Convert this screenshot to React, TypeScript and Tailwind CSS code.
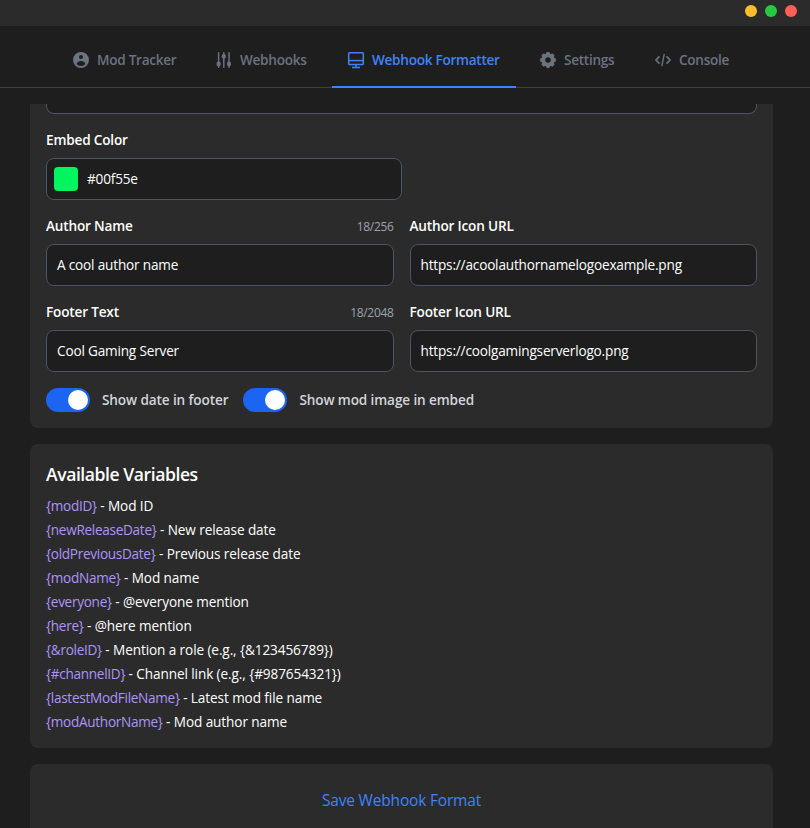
import type { ReactNode } from "react";
import { HiUserCircle } from "react-icons/hi";

function SlidersIcon() {
  return (
    <svg viewBox="0 0 20 20" className="h-5 w-5" fill="currentColor" stroke="currentColor" strokeWidth="1.5" strokeLinecap="round">
      <path d="M4.6 2.8v14.4M9.8 2.8v14.4M15 2.8v14.4" />
      <g stroke="none">
        <ellipse cx="4.6" cy="14" rx="2.1" ry="2.4" />
        <ellipse cx="9.8" cy="6.4" rx="2.1" ry="2.4" />
        <ellipse cx="15" cy="14" rx="2.1" ry="2.4" />
      </g>
    </svg>
  );
}

function MonitorIcon() {
  return (
    <svg viewBox="0 0 20 20" className="h-5 w-5" fill="none" stroke="currentColor" strokeWidth="1.5">
      <rect x="2.7" y="2.7" width="14.6" height="11.8" rx="0.8" />
      <path d="M2.7 10.6h14.6" />
      <path d="M10 14.3v3M6 17.4h8" />
    </svg>
  );
}

function GearIcon() {
  return (
    <svg viewBox="0 0 20 20" className="h-5 w-5" fill="currentColor">
      <circle cx="10" cy="10" r="4.75" fill="none" stroke="currentColor" strokeWidth="4" />
      {[0, 45, 90, 135, 180, 225, 270, 315].map((a) => (
        <rect key={a} x="8.1" y="2.1" width="3.8" height="3" rx="1.1" transform={`rotate(${a} 10 10)`} />
      ))}
    </svg>
  );
}

function CodeIcon() {
  return (
    <svg viewBox="0 0 20 20" className="h-5 w-5" fill="none" stroke="currentColor" strokeWidth="1.7" strokeLinecap="round" strokeLinejoin="round">
      <path d="M6 6.8 2.9 10 6 13.2M14 6.8l3.1 3.2-3.1 3.2" />
      <path d="M11.2 4.4 8.9 15.6" strokeWidth="1.4" />
    </svg>
  );
}

const tabs: { label: string; icon: ReactNode; width: string; active?: boolean }[] = [
  { label: "Mod Tracker", icon: <HiUserCircle className="h-5 w-5" />, width: "w-[135px]" },
  { label: "Webhooks", icon: <SlidersIcon />, width: "w-[124px]" },
  { label: "Webhook Formatter", icon: <MonitorIcon />, width: "w-[184px]", active: true },
  { label: "Settings", icon: <GearIcon />, width: "w-[107px]" },
  { label: "Console", icon: <CodeIcon />, width: "w-[107px]" },
];

const variables = [
  ["{modID}", "Mod ID"],
  ["{newReleaseDate}", "New release date"],
  ["{oldPreviousDate}", "Previous release date"],
  ["{modName}", "Mod name"],
  ["{everyone}", "@everyone mention"],
  ["{here}", "@here mention"],
  ["{&roleID}", "Mention a role (e.g., {&123456789})"],
  ["{#channelID}", "Channel link (e.g., {#987654321})"],
  ["{lastestModFileName}", "Latest mod file name"],
  ["{modAuthorName}", "Mod author name"],
];

function Field({ label, value, count }: { label: string; value: string; count?: string }) {
  return (
    <div>
      <div className="mb-2 flex h-5 items-center justify-between leading-5">
        <span className="font-semibold">{label}</span>
        {count && <span className="pt-px text-[12px] tracking-[-0.33px] text-[#9ca3af]">{count}</span>}
      </div>
      <div className="flex h-[42px] items-center rounded-lg border border-[#4b5563] bg-[#1e1e1e] px-2.5 leading-5">{value}</div>
    </div>
  );
}

function Toggle({ label }: { label: string }) {
  return (
    <div className="flex h-6 items-center">
      <span className="mr-3 flex h-6 w-11 items-center justify-end rounded-full bg-[#1c64f2] p-0.5">
        <span className="h-5 w-5 rounded-full bg-white" />
      </span>
      <span className="leading-5 font-semibold tracking-[-0.12px] text-[#d1d5db]">{label}</span>
    </div>
  );
}

export default function App() {
  return (
    <div className="flex h-[828px] w-[810px] flex-col overflow-hidden bg-[#1e1e1e] font-['Open_Sans',sans-serif] text-[13.6px] tracking-[-0.18px] text-white">
      <header className="flex h-[26px] shrink-0 justify-end gap-2 bg-[#2b2b2b] pt-[5px] pr-[13px]">
        <span className="h-3 w-3 rounded-full bg-[#ffbd2e]" />
        <span className="h-3 w-3 rounded-full bg-[#28c940]" />
        <span className="h-3 w-3 rounded-full bg-[#ff5f57]" />
      </header>

      <nav className="flex h-[62px] shrink-0 items-end gap-2 border-b border-[#374151] pl-[57px]">
        {tabs.map((t) => (
          <div
            key={t.label}
            className={`-mb-px flex h-[54px] shrink-0 items-center gap-1.5 border-b-2 pl-3.5 font-semibold tracking-[-0.28px] whitespace-nowrap ${t.width} ${
              t.active ? "border-[#3f83f8] text-[#3f83f8]" : "border-transparent text-[#6b7280]"
            }`}
          >
            {t.icon}
            <span className="leading-5">{t.label}</span>
          </div>
        ))}
      </nav>

      <main className="mt-4 flex min-h-0 flex-1 flex-col gap-4 overflow-hidden pr-[37px] pl-[30px]">
        <section className="shrink-0 rounded-b-lg bg-[#2b2b2b] px-4 pb-4">
          <div className="h-2.5 rounded-b-lg border border-t-0 border-[#4b5563] bg-[#1e1e1e]" />

          <div className="mt-4 mb-2 h-5 leading-5 font-semibold">Embed Color</div>
          <div className="flex h-[42px] w-1/2 items-center rounded-lg border border-[#4b5563] bg-[#1e1e1e] pl-[7px]">
            <span className="mr-[9px] h-6 w-6 rounded bg-[#00f55e]" />
            <span className="leading-5">#00f55e</span>
          </div>

          <div className="mt-4 grid grid-cols-2 gap-4">
            <Field label="Author Name" value="A cool author name" count="18/256" />
            <Field label="Author Icon URL" value="https://acoolauthornamelogoexample.png" />
            <Field label="Footer Text" value="Cool Gaming Server" count="18/2048" />
            <Field label="Footer Icon URL" value="https://coolgamingserverlogo.png" />
          </div>

          <div className="mt-4 flex gap-[15px]">
            <Toggle label="Show date in footer" />
            <Toggle label="Show mod image in embed" />
          </div>
        </section>

        <section className="shrink-0 rounded-lg bg-[#2b2b2b] p-4">
          <h2 className="mb-2 text-[17.6px] leading-7 font-semibold tracking-[-0.45px]">Available Variables</h2>
          <ul className="flex flex-col gap-1 leading-5 tracking-[-0.1px]">
            {variables.map(([name, text]) => (
              <li key={name}>
                <span className="tracking-[-0.3px] text-[#ac94fa]">{name}</span> - {text}
              </li>
            ))}
          </ul>
        </section>

        <section className="h-24 shrink-0 rounded-t-lg bg-[#2b2b2b] p-4">
          <button className="flex h-10 w-full items-center justify-center pt-0.5 text-[15.5px] text-[#3f83f8]">Save Webhook Format</button>
        </section>
      </main>
    </div>
  );
}
